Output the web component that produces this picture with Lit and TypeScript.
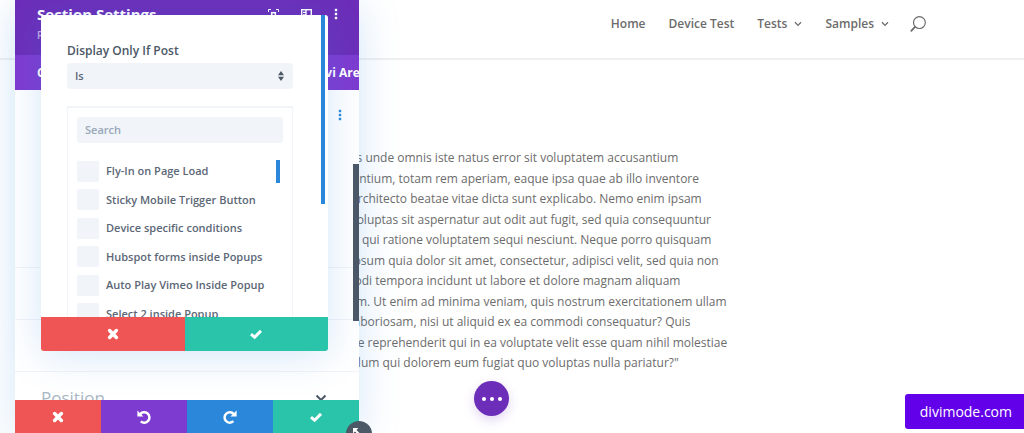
import { LitElement, html, css } from "lit";
import { customElement, property } from "lit/decorators.js";

const cross = html`<svg class="glyph" viewBox="0 0 12 12" aria-hidden="true">
  <path d="M2.6 2.6 L9.4 9.4 M9.4 2.6 L2.6 9.4" stroke="currentColor" stroke-width="3.5" stroke-linecap="round" />
</svg>`;
const check = html`<svg class="glyph" viewBox="0 0 12 12" aria-hidden="true">
  <path d="M1 6.2 L4.6 9.2 L11 2.9" fill="none" stroke="currentColor" stroke-width="3" />
</svg>`;
const undo = html`<svg class="turn" viewBox="0 0 14 14" aria-hidden="true">
  <path d="M3 4.4 A5.2 5.2 0 1 1 3.8 11.4" fill="none" stroke="currentColor" stroke-width="2.5" />
  <path d="M0.4 0.6 V6.4 H6.4 Z" fill="currentColor" />
</svg>`;
const redo = html`<svg class="turn" viewBox="0 0 14 14" aria-hidden="true">
  <path d="M10.7 4 A5.2 5.2 0 1 0 10.4 11.2" fill="none" stroke="currentColor" stroke-width="2.5" />
  <path d="M13.6 0.4 V6.4 H7.4 Z" fill="currentColor" />
</svg>`;
const dots = html`<svg class="dots" viewBox="0 0 4 12" aria-hidden="true">
  <rect x="0.8" y="0.8" width="2.4" height="2.4" fill="currentColor" />
  <rect x="0.8" y="4.8" width="2.4" height="2.4" fill="currentColor" />
  <rect x="0.8" y="8.8" width="2.4" height="2.4" fill="currentColor" />
</svg>`;

const buttonReset = css`
  * {
    box-sizing: border-box;
  }
  button {
    border: 0;
    padding: 0;
    margin: 0;
    color: #fff;
    background: none;
    font: inherit;
    display: flex;
    align-items: center;
    justify-content: center;
  }
  svg {
    display: block;
    flex: none;
  }
  .glyph {
    width: 12px;
    height: 12px;
  }
  .turn {
    width: 14px;
    height: 14px;
  }
  .dots {
    width: 4px;
    height: 12px;
  }
  .red {
    background: #ef5555;
  }
  .violet {
    background: #7e3bd0;
  }
  .blue {
    background: #2b87da;
  }
  .green {
    background: #29c4a9;
  }
`;

@customElement("site-header")
class SiteHeader extends LitElement {
  static styles = css`
    :host {
      display: block;
      border-bottom: 2px solid #f0f0f0;
    }
    nav {
      display: flex;
      align-items: center;
      justify-content: flex-end;
      gap: 21px;
      height: 48px;
      padding: 0 98px 10px 0;
    }
    .links {
      display: flex;
      gap: 23px;
    }
    a {
      display: flex;
      align-items: center;
      gap: 7px;
      color: #6c6c6c;
      font-size: 12px;
      font-weight: 600;
      line-height: 20px;
      text-decoration: none;
    }
    .chevron {
      width: 8px;
      height: 6px;
    }
    button {
      border: 0;
      padding: 0;
      background: none;
      color: #6c6c6c;
    }
    .lens {
      display: block;
      width: 16px;
      height: 16px;
    }
  `;
  private links = [
    { text: "Home", menu: false },
    { text: "Device Test", menu: false },
    { text: "Tests", menu: true },
    { text: "Samples", menu: true },
  ];
  render() {
    return html`<nav>
      <div class="links">
        ${this.links.map(
          (l) => html`<a href="#">${l.text}${l.menu
            ? html`<svg class="chevron" viewBox="0 0 8 6" aria-hidden="true">
                <path d="M1 1.2 L4 4.4 L7 1.2" fill="none" stroke="currentColor" stroke-width="1.3" />
              </svg>`
            : ""}</a>`
        )}
      </div>
      <button aria-label="Search">
        <svg class="lens" viewBox="0 0 16 16" aria-hidden="true">
          <circle cx="9.4" cy="6.6" r="5.9" fill="none" stroke="currentColor" stroke-width="1.2" />
          <path d="M5 10.9 L1.3 14.8" stroke="currentColor" stroke-width="1.8" stroke-linecap="round" />
        </svg>
      </button>
    </nav>`;
  }
}

@customElement("option-dialog")
class OptionDialog extends LitElement {
  static styles = [
    buttonReset,
    css`
      :host {
        display: flex;
        flex-direction: column;
        background: #fff;
        border-radius: 3px;
        box-shadow: 0 5px 40px rgba(43, 135, 218, 0.2);
        overflow: hidden;
      }
      .scroll {
        flex: 1;
        min-height: 0;
        overflow: hidden;
        display: flex;
        justify-content: space-between;
      }
      .fields {
        flex: 1;
        padding: 27px 28px 0 26px;
      }
      .track {
        width: 4px;
        height: 189px;
        margin-right: 3px;
        background: #2b87da;
      }
      .title {
        display: block;
        color: #4c5866;
        font-size: 12px;
        font-weight: 600;
        line-height: 18px;
        margin-bottom: 3px;
      }
      .pick {
        display: grid;
        align-items: center;
      }
      .pick > * {
        grid-area: 1 / 1;
      }
      select,
      .search {
        appearance: none;
        width: 100%;
        height: 26px;
        border: 0;
        border-radius: 3px;
        outline: 0;
        margin: 0;
        padding: 0 8px;
        background: #f1f4f9;
        color: #5c6776;
        font: 600 11px/26px "Open Sans", sans-serif;
      }
      .search::placeholder {
        color: #98a7b8;
        opacity: 1;
      }
      .sort {
        width: 6px;
        height: 10px;
        justify-self: end;
        margin-right: 9px;
        color: #4c5866;
        pointer-events: none;
      }
      .box {
        margin-top: 17px;
        padding: 9px;
        border: 1px solid #f1f4f9;
        border-width: 2px 1px 0;
      }
      .list {
        display: flex;
        justify-content: space-between;
        margin-top: 14px;
      }
      .rows {
        display: grid;
        grid-template-rows: repeat(6, 1fr);
        height: 171px;
      }
      .row {
        display: flex;
        align-items: center;
        gap: 7px;
        color: #5c6776;
        font-size: 11px;
        font-weight: 600;
        line-height: 18px;
      }
      .row input {
        appearance: none;
        width: 22px;
        height: 21px;
        margin: 0;
        border-radius: 2px;
        background: #f1f4f9;
      }
      .thumb {
        width: 4px;
        height: 23px;
        margin: 3px 3px 0 0;
        background: #2b87da;
      }
      footer {
        display: grid;
        grid-template-columns: 1fr 1fr;
        height: 34px;
      }
    `,
  ];
  @property({ attribute: false }) pages: string[] = [];
  render() {
    return html`
      <div class="scroll">
        <div class="fields">
          <label class="title" for="rule">Display Only If Post</label>
          <div class="pick">
            <select id="rule">
              <option>Is</option>
              <option>Is Not</option>
            </select>
            <svg class="sort" viewBox="0 0 6 10" aria-hidden="true">
              <path d="M3 0 L6 4.2 H0 Z M3 10 L6 5.8 H0 Z" fill="currentColor" />
            </svg>
          </div>
          <div class="box">
            <input class="search" type="text" placeholder="Search" aria-label="Search" />
            <div class="list">
              <div class="rows">
                ${this.pages.map((p) => html`<label class="row"><input type="checkbox" />${p}</label>`)}
              </div>
              <div class="thumb"></div>
            </div>
          </div>
        </div>
        <div class="track"></div>
      </div>
      <footer>
        <button class="red" aria-label="Cancel">${cross}</button>
        <button class="green" aria-label="Apply">${check}</button>
      </footer>
    `;
  }
}

@customElement("settings-panel")
class SettingsPanel extends LitElement {
  static styles = [
    buttonReset,
    css`
      :host {
        display: flex;
        flex-direction: column;
        background: #fff;
        box-shadow: 0 5px 40px rgba(43, 135, 218, 0.2);
      }
      .head {
        display: flex;
        justify-content: space-between;
        height: 55px;
        padding: 4px 21px 0 22px;
        background: #6c2eb9;
        color: #fff;
      }
      h2 {
        margin: 0;
        font-size: 15px;
        font-weight: 700;
        line-height: 20px;
      }
      .preset {
        font-size: 10px;
        font-weight: 600;
        line-height: 22px;
        opacity: 0.6;
      }
      .tools {
        display: flex;
        align-items: center;
        gap: 22px;
        height: 20px;
      }
      .tool {
        width: 11px;
        height: 11px;
      }
      .tabs {
        display: flex;
        justify-content: space-between;
        height: 35px;
        padding-left: 22px;
        background: #7e3bd0;
        overflow: hidden;
      }
      .tabs button {
        font-size: 12px;
        font-weight: 700;
        white-space: nowrap;
      }
      .tabs button:last-child {
        margin-right: -8px;
      }
      .body {
        flex: 1;
        min-height: 0;
        overflow: hidden;
      }
      .group {
        display: flex;
        justify-content: flex-end;
        padding: 19px 17px 0;
        height: 178px;
        color: #2b87da;
        border-bottom: 1px solid #f1f4f9;
      }
      .group button {
        height: 12px;
        color: inherit;
      }
      .closed {
        height: 52px;
        border-bottom: 1px solid #f1f4f9;
      }
      .position {
        display: flex;
        align-items: center;
        justify-content: space-between;
        padding: 0 32px 0 26px;
        color: #a9b6c4;
        font-size: 17px;
        line-height: 52px;
      }
      .arrow {
        width: 12px;
        height: 8px;
        color: #4c5866;
      }
      .foot {
        display: grid;
        grid-template-columns: repeat(4, 1fr);
        height: 33px;
      }
      .bar {
        position: absolute;
        top: 164px;
        right: 0;
        width: 6px;
        height: 157px;
        background: #4c5866;
      }
      .inner {
        position: absolute;
        top: 15px;
        left: 26px;
        right: 31px;
        height: 336px;
      }
      .resize {
        position: absolute;
        right: -13px;
        bottom: -14px;
        width: 26px;
        height: 26px;
        border-radius: 50%;
        background: #4c5866;
      }
      .resize svg {
        width: 14px;
        height: 14px;
      }
    `,
  ];
  private pages = [
    "Fly-In on Page Load",
    "Sticky Mobile Trigger Button",
    "Device specific conditions",
    "Hubspot forms inside Popups",
    "Auto Play Vimeo Inside Popup",
    "Select 2 inside Popup",
  ];
  render() {
    return html`
      <div class="head">
        <div>
          <h2>Section Settings</h2>
          <div class="preset">Preset: Default</div>
        </div>
        <div class="tools">
          <svg class="tool" viewBox="0 0 11 11" fill="none" stroke="currentColor" aria-hidden="true">
            <path d="M0.5 3 V0.5 H3 M8 0.5 H10.5 V3 M10.5 8 V10.5 H8 M3 10.5 H0.5 V8" />
            <rect x="3.7" y="3.7" width="3.6" height="3.6" stroke-width="1.6" />
          </svg>
          <svg class="tool" viewBox="0 0 11 11" fill="none" stroke="currentColor" aria-hidden="true">
            <rect x="0.7" y="0.7" width="9.6" height="9.6" stroke-width="1.4" />
            <path d="M5 0.7 V10.3 M2 3.4 H5 M2 6 H5" stroke-width="1.4" />
          </svg>
          ${dots}
        </div>
      </div>
      <div class="tabs">
        <button>Content</button>
        <button>Divi Area</button>
      </div>
      <div class="body">
        <div class="group"><button aria-label="More options">${dots}</button></div>
        <div class="closed"></div>
        <div class="closed"></div>
        <div class="position">
          <span>Position</span>
          <svg class="arrow" viewBox="0 0 12 8" aria-hidden="true">
            <path d="M1.5 1.5 L6 6 L10.5 1.5" fill="none" stroke="currentColor" stroke-width="2" />
          </svg>
        </div>
      </div>
      <div class="foot">
        <button class="red" aria-label="Discard">${cross}</button>
        <button class="violet" aria-label="Undo">${undo}</button>
        <button class="blue" aria-label="Redo">${redo}</button>
        <button class="green" aria-label="Save">${check}</button>
      </div>
      <div class="bar"></div>
      <option-dialog class="inner" .pages=${this.pages}></option-dialog>
      <button class="resize" aria-label="Resize">
        <svg viewBox="0 0 14 14" aria-hidden="true">
          <path d="M1 1 H6.4 L1 6.4 Z M13 13 H7.6 L13 7.6 Z" fill="currentColor" />
          <path d="M3 3 L11 11" stroke="currentColor" stroke-width="2" />
        </svg>
      </button>
    `;
  }
}

@customElement("app-root")
class AppRoot extends LitElement {
  static styles = css`
    :host {
      display: block;
      position: relative;
      height: 100vh;
      overflow: hidden;
      background: #fff;
      color: #6c6c6c;
      font-family: "Open Sans", sans-serif;
    }
    .text {
      display: grid;
      grid-auto-rows: 1fr;
      height: 226px;
      margin: 88px 0 0 256px;
      font-size: 12px;
      line-height: 20px;
      white-space: nowrap;
    }
    .panel {
      position: absolute;
      left: 15px;
      top: 0;
      bottom: 0;
      width: 344px;
    }
    .more {
      position: absolute;
      left: 474px;
      bottom: 17px;
      width: 35px;
      height: 35px;
      display: flex;
      align-items: center;
      justify-content: center;
      padding: 0;
      border: 0;
      border-radius: 50%;
      background: #6c2eb9;
      box-shadow: 0 4px 12px rgba(108, 46, 185, 0.2);
    }
    .more svg {
      width: 20px;
      height: 4px;
    }
    .badge {
      position: absolute;
      right: 0;
      bottom: 4px;
      padding: 0 12px 0 15px;
      border-radius: 3px 0 0 3px;
      background: #6200ea;
      color: #fff;
      font-size: 14px;
      line-height: 35px;
      text-decoration: none;
    }
  `;
  private lines = [
    "“Sed ut perspiciatis unde omnis iste natus error sit voluptatem accusantium",
    "doloremque laudantium, totam rem aperiam, eaque ipsa quae ab illo inventore",
    "veritatis et quasi architecto beatae vitae dicta sunt explicabo. Nemo enim ipsam",
    "voluptatem quia voluptas sit aspernatur aut odit aut fugit, sed quia consequuntur",
    "magni dolores eos qui ratione voluptatem sequi nesciunt. Neque porro quisquam",
    "est, qui dolorem ipsum quia dolor sit amet, consectetur, adipisci velit, sed quia non",
    "numquam eius modi tempora incidunt ut labore et dolore magnam aliquam",
    "quaerat voluptatem. Ut enim ad minima veniam, quis nostrum exercitationem ullam",
    "corporis suscipit laboriosam, nisi ut aliquid ex ea commodi consequatur? Quis",
    "autem vel eum iure reprehenderit qui in ea voluptate velit esse quam nihil molestiae",
    "consequatur, vel illum qui dolorem eum fugiat quo voluptas nulla pariatur?\"",
  ];
  render() {
    return html`
      <site-header></site-header>
      <main class="text">${this.lines.map((l) => html`<span>${l}</span>`)}</main>
      <settings-panel class="panel"></settings-panel>
      <button class="more" aria-label="Page settings">
        <svg viewBox="0 0 20 4" aria-hidden="true" fill="#fff">
          <circle cx="2" cy="2" r="2" />
          <circle cx="10" cy="2" r="2" />
          <circle cx="18" cy="2" r="2" />
        </svg>
      </button>
      <a class="badge" href="#">divimode.com</a>
    `;
  }
}
